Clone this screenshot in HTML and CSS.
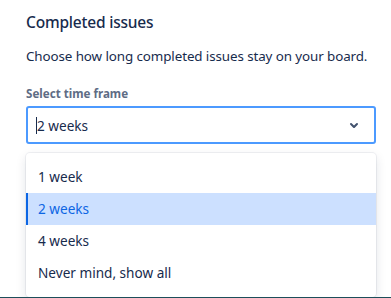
FILE: index.html
```html
<!DOCTYPE html>
<html>
<head>
<meta charset="utf-8">
<link rel="stylesheet" href="styles.css">
</head>
<body>
<div class="page">
  <div class="panel">
    <h2 class="title">Completed issues</h2>
    <p class="desc">Choose how long completed issues stay on your board.</p>
    <label class="label">Select time frame</label>
    <div class="select">
      <span class="caret"></span><span class="value">2 weeks</span>
      <svg class="chev" width="24" height="24" viewBox="0 0 24 24"><path d="M8.292 10.293a1.009 1.009 0 0 0 0 1.419l2.939 2.965c.218.215.5.322.779.322s.556-.107.769-.322l2.93-2.955a1.01 1.01 0 0 0 0-1.419.987.987 0 0 0-1.406 0l-2.298 2.317-2.307-2.327a.99.99 0 0 0-1.406 0z" fill="#42526E"/></svg>
    </div>
    <div class="menu">
      <div class="item">1 week</div>
      <div class="item selected">2 weeks</div>
      <div class="item">4 weeks</div>
      <div class="item">Never mind, show all</div>
    </div>
  </div>
</div>
<div class="footer"></div>
</body>
</html>
```
FILE: styles.css
```css
html, body { margin: 0; padding: 0; background: #fff; }
body { font-family: "Noto Sans", "Open Sans", sans-serif; color: #172B4D; width: 391px; height: 298px; overflow: hidden; }
.page { height: 297px; overflow: hidden; }
.panel { padding: 12px 15px 0 26px; }
.title { margin: 0; font-size: 15.5px; font-weight: 500; line-height: 20px; color: #172B4D; letter-spacing: -0.2px; white-space: nowrap; }
.desc { margin: 14px 0 0; font-size: 13.4px; line-height: 20px; color: #172B4D; white-space: nowrap; letter-spacing: -0.1px; }
.label { display: block; margin-top: 20px; font-size: 11.6px; font-weight: 700; line-height: 16px; color: #5E6C84; }
.select { margin-top: 4px; height: 38px; box-sizing: border-box; border: 2px solid #4C9AFF; border-radius: 3px; display: flex; align-items: center; padding: 0 8px 0 8px; font-size: 13.6px; }
.caret { width: 1px; height: 17px; background: #172B4D; }
.value { flex: 1; }
.menu { margin-top: 9px; border-radius: 4px; box-shadow: 0 0 0 1px rgba(9,30,66,0.06), 0 4px 11px rgba(9,30,66,0.12); padding: 8px 0; background: #fff; }
.item { height: 32px; line-height: 32px; padding-left: 12px; font-size: 13.6px; color: #172B4D; }
.item.selected { background: #CCE0FF; color: #0C66E4; box-shadow: inset 2px 0 0 #0C66E4; }
.footer { height: 1px; background: #1D4E5A; }
```
